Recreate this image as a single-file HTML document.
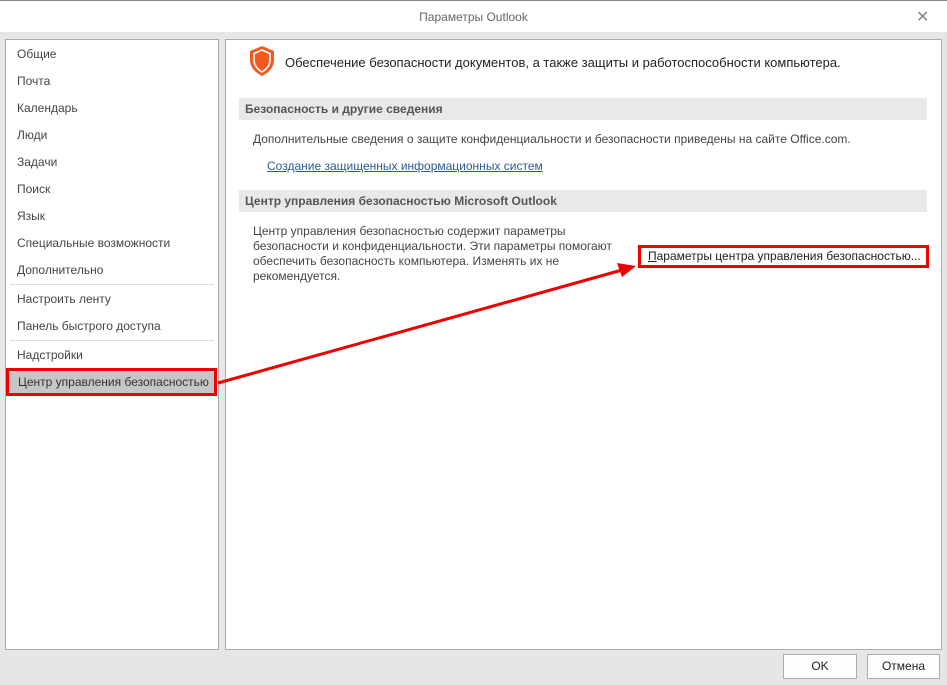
<!DOCTYPE html>
<html><head><meta charset="utf-8"><style>
body{margin:0;width:947px;height:685px;background:#e6e6e6;font-family:"Liberation Sans",sans-serif;font-size:12px;color:#444;position:relative;overflow:hidden}
.a{position:absolute}
.title{left:0;top:0;width:947px;height:32px;background:#fff;border-top:1px solid #888;box-sizing:border-box;text-align:center;line-height:32px;color:#666;font-size:12px}
.panel{background:#fff;border:1px solid #ababab;box-sizing:border-box}
.nav div{position:absolute;left:11px}
.sep{position:absolute;left:4px;width:204px;height:1px;background:#ddd}
.hdr{background:#e9e9e9;font-weight:bold;color:#555;padding-left:6px;line-height:22px}
.btn{background:#fdfdfd;border:1px solid #adadad;box-sizing:border-box;text-align:center;line-height:22px;color:#222}
</style></head><body>
<div class="a title">Параметры Outlook</div>
<div class="a" style="left:916px;top:7px;font-size:16px;color:#888">✕</div>
<div class="a panel nav" style="left:5px;top:39px;width:214px;height:611px">
<div style="top:7px">Общие</div>
<div style="top:34px">Почта</div>
<div style="top:61px">Календарь</div>
<div style="top:88px">Люди</div>
<div style="top:115px">Задачи</div>
<div style="top:142px">Поиск</div>
<div style="top:169px">Язык</div>
<div style="top:196px">Специальные возможности</div>
<div style="top:223px">Дополнительно</div>
<span class="sep" style="top:244px"></span>
<div style="top:252px">Настроить ленту</div>
<div style="top:279px">Панель быстрого доступа</div>
<span class="sep" style="top:300px"></span>
<div style="top:308px">Надстройки</div>
</div>
<div class="a" style="left:6px;top:368px;width:211px;height:28px;background:#c6c6c6;border:3px solid #e00;box-sizing:border-box;line-height:22px;padding-left:9px;color:#333">Центр управления безопасностью</div>
<div class="a panel" style="left:225px;top:39px;width:717px;height:611px"></div>
<svg class="a" style="left:249px;top:45px" width="26" height="32" viewBox="0 0 26 32"><path d="M13 1 L25 6 V15 C25 23 19 28 13 31 C7 28 1 23 1 15 V6 Z" fill="#f25a22"/><path d="M13 5 L21 8.5 V15 C21 21 17 24.5 13 27 C9 24.5 5 21 5 15 V8.5 Z" fill="none" stroke="#fff" stroke-width="1.6"/></svg>
<div class="a" style="left:285px;top:55px;font-size:13px;color:#222">Обеспечение безопасности документов, а также защиты и работоспособности компьютера.</div>
<div class="a hdr" style="left:239px;top:98px;width:682px;height:22px">Безопасность и другие сведения</div>
<div class="a" style="left:253px;top:132px">Дополнительные сведения о защите конфиденциальности и безопасности приведены на сайте Office.com.</div>
<div class="a" style="left:267px;top:159px;color:#2a5a9a;text-decoration:underline">Создание защищенных информационных систем</div>
<div class="a hdr" style="left:239px;top:190px;width:682px;height:22px">Центр управления безопасностью Microsoft Outlook</div>
<div class="a" style="left:253px;top:224px;width:360px;line-height:15px">Центр управления безопасностью содержит параметры безопасности и конфиденциальности. Эти параметры помогают обеспечить безопасность компьютера. Изменять их не рекомендуется.</div>
<div class="a" style="left:638px;top:245px;width:291px;height:23px;border:3px solid #e00;box-sizing:border-box;background:#fdfdfd;line-height:17px;padding-left:7px;color:#222"><u>П</u>араметры центра управления безопасностью...</div>
<svg class="a" style="left:0;top:0" width="947" height="685"><line x1="218" y1="383" x2="622" y2="270" stroke="#e00" stroke-width="3"/><polygon points="636,266 617,263 622,277" fill="#e00"/></svg>
<div class="a btn" style="left:783px;top:654px;width:74px;height:25px">OK</div>
<div class="a btn" style="left:867px;top:654px;width:73px;height:25px">Отмена</div>
</body></html>
